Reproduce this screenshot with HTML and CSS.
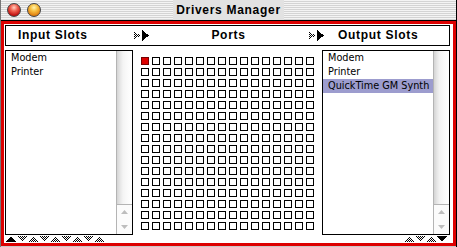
FILE: index.html
```html
<!DOCTYPE html>
<html>
<head>
	<meta charset="utf-8">
	<title>Drivers Manager</title>
	<link rel="stylesheet" href="styles.css">
</head>
<body>
	<div class="window">
		<div class="titlebar">
			<div class="buttons"><span class="btn close"></span><span class="btn collapse"></span></div>
			<div class="title">Drivers Manager</div>
			<div></div>
		</div>
		<div class="frame">
			<div class="header">
				<div class="in">Input Slots</div>
				<div class="arrow"><svg width="16" height="11" shape-rendering="crispEdges"><defs><pattern id="d1" width="2" height="2" patternUnits="userSpaceOnUse"><rect width="1" height="1"/><rect x="1" y="1" width="1" height="1"/></pattern></defs><polygon points="0,1 6,5.5 0,10" fill="url(#d1)"/><polygon points="8,0 15,5.5 8,11"/></svg></div>
				<div class="ports">Ports</div>
				<div class="arrow a2"><svg width="16" height="11" shape-rendering="crispEdges"><defs><pattern id="d2" width="2" height="2" patternUnits="userSpaceOnUse"><rect width="1" height="1"/><rect x="1" y="1" width="1" height="1"/></pattern></defs><polygon points="0,1 6,5.5 0,10" fill="url(#d2)"/><polygon points="8,0 15,5.5 8,11"/></svg></div>
				<div class="out">Output Slots</div>
			</div>
			<div class="panes">
				<div class="list">
					<ul class="items">
						<li>Modem</li>
						<li>Printer</li>
					</ul>
					<div class="scroll">
						<div class="track"></div>
						<div class="sarrows">
							<svg width="7" height="4"><polygon points="0,4 3.5,0 7,4"/></svg>
							<svg width="7" height="4"><polygon points="0,0 7,0 3.5,4"/></svg>
						</div>
					</div>
				</div>
				<div class="grid" id="grid"></div>
				<div class="list right">
					<ul class="items">
						<li>Modem</li>
						<li>Printer</li>
						<li class="sel">QuickTime GM Synth</li>
					</ul>
					<div class="scroll">
						<div class="track"></div>
						<div class="sarrows">
							<svg width="7" height="4"><polygon points="0,4 3.5,0 7,4"/></svg>
							<svg width="7" height="4"><polygon points="0,0 7,0 3.5,4"/></svg>
						</div>
					</div>
				</div>
			</div>
			<div class="tabs">
				<svg width="99" height="6" shape-rendering="crispEdges">
					<defs><pattern id="d3" width="2" height="2" patternUnits="userSpaceOnUse"><rect width="1" height="1"/><rect x="1" y="1" width="1" height="1"/></pattern></defs>
					<polygon points="0,6 5,0 10,6"/>
					<polygon points="11,0 21,0 16,6" fill="url(#d3)"/>
					<polygon points="22,6 27,0 32,6" fill="url(#d3)"/>
					<polygon points="33,0 43,0 38,6" fill="url(#d3)"/>
					<polygon points="44,6 49,0 54,6" fill="url(#d3)"/>
					<polygon points="55,0 65,0 60,6" fill="url(#d3)"/>
					<polygon points="66,6 71,0 76,6" fill="url(#d3)"/>
					<polygon points="77,0 87,0 82,6" fill="url(#d3)"/>
					<polygon points="88,6 93,0 98,6" fill="url(#d3)"/>
				</svg>
				<svg width="44" height="6" shape-rendering="crispEdges">
					<defs><pattern id="d4" width="2" height="2" patternUnits="userSpaceOnUse"><rect width="1" height="1"/><rect x="1" y="1" width="1" height="1"/></pattern></defs>
					<polygon points="0,6 5,0 10,6" fill="url(#d4)"/>
					<polygon points="11,0 21,0 16,6" fill="url(#d4)"/>
					<polygon points="22,6 27,0 32,6" fill="url(#d4)"/>
					<polygon points="33,0 43,0 38,6"/>
				</svg>
			</div>
		</div>
	</div>
<script>
	const grid = document.getElementById('grid');
	for(let i = 0; i < 256; i++){
		const cell = document.createElement('span');
		if(i == 0) cell.className = 'on';
		grid.appendChild(cell);
	}
</script>
</body>
</html>
```
FILE: styles.css
```css
body{margin: 0;background-color: #bbb;}
.window{width: 457px;height: 247px;box-sizing: border-box;border-left: 1px solid #777;border-right: 1px solid #000;background-color: #c8c8c8;}
.titlebar{height: 20px;border-bottom: 1px solid #000;display: grid;grid-template-columns: 1fr auto 1fr;align-items: center;background: repeating-linear-gradient(#f4f4f4 0 1px, #d4d4d4 1px 2px);}
.buttons{display: flex;gap: 6px;padding-left: 6px;}
.btn{width: 14px;height: 14px;border-radius: 50%;box-sizing: border-box;border: 1px solid #444;}
.close{background: radial-gradient(circle at 50% 30%, #ffd0c0 0, #f06050 35%, #c01010 75%, #800000 100%);}
.collapse{background: radial-gradient(circle at 50% 30%, #fff4b0 0, #f8c040 35%, #e08010 75%, #a05000 100%);}
.title{font: bold 12px/20px "Liberation Sans", sans-serif;letter-spacing: 0.7px;padding: 0 3px;background-color: #e2e2e2;color: #000;}
.frame{border: 3px solid #dd0000;height: 219px;background-color: #fff;display: flex;flex-direction: column;}
.header{margin: 1px 3px 0 1px;height: 21px;box-sizing: border-box;border: 1px solid #000;display: grid;grid-template-columns: 127px 18px 155px 18px 125px;font: bold 12px/19px "Liberation Sans", sans-serif;letter-spacing: 0.7px;}
.in{padding-left: 12px;}
.ports{text-align: center;}
.out{padding-left: 14px;}
.arrow{display: flex;align-items: center;padding-left: 1px;}
.a2{padding-left: 3px;}
.panes{display: flex;margin: 4px 3px 0 1px;height: 185px;}
.list{width: 128px;box-sizing: border-box;border: 1px solid #000;display: flex;}
.right{margin-left: auto;}
.items{flex: 1;list-style: none;margin: 0;padding: 0;font: 10.8px/14px "DejaVu Sans Condensed", "DejaVu Sans", sans-serif;}
.items li{padding-left: 5px;white-space: nowrap;overflow: hidden;}
.items .sel{background-color: #9c9cce;}
.scroll{width: 16px;box-sizing: border-box;border-left: 1px solid #b4b4b4;display: flex;flex-direction: column;}
.track{flex: 1;background: linear-gradient(to right, #d4d4d4 0, #e6e6e6 3px, #f4f4f4 6px, #fafafa 10px, #fff 100%);}
.sarrows{height: 29px;border-top: 1px solid #b4b4b4;display: flex;flex-direction: column;align-items: center;justify-content: space-around;background-color: #fbfbfb;}
.sarrows svg{fill: #bdbdbd;}
.grid{display: grid;grid-template-columns: repeat(16, 8px);grid-auto-rows: 8px;gap: 3px;margin: 7px 0 0 8px;align-content: start;}
.grid span{box-sizing: border-box;border: 1px solid #000;}
.grid .on{background-color: #dd0000;border-color: #700;}
.tabs{display: flex;justify-content: space-between;padding: 1px 5px 0 2px;}
```
